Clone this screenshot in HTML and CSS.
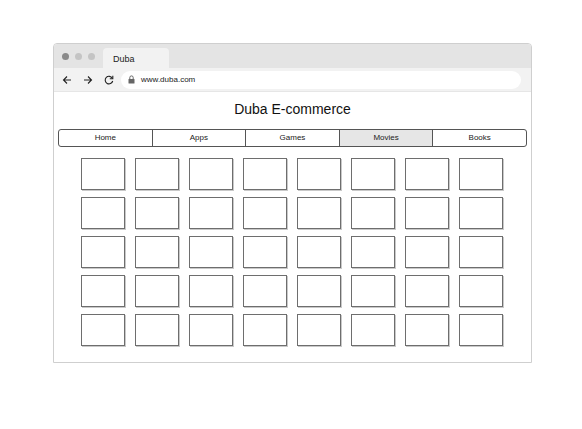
FILE: index.html
```html
<!DOCTYPE html>
<html lang="en">

<head>
    <meta charset="UTF-8">
    <meta name="viewport" content="width=device-width, initial-scale=1.0">
    <link rel="stylesheet" href="styles.css">
    <title>Duba</title>
</head>

<body>
    <div class="window">
        <div class="titlebar">
            <div class="dots">
                <span class="dot dark"></span>
                <span class="dot"></span>
                <span class="dot"></span>
            </div>
            <div class="tab">Duba</div>
        </div>
        <div class="toolbar">
            <div class="nav-icons">
                <svg width="10" height="10" viewBox="0 0 10 10"><path d="M9 5H1.5M5 1.5 1.5 5 5 8.5" fill="none" stroke="#222" stroke-width="1.1"/></svg>
                <svg width="10" height="10" viewBox="0 0 10 10"><path d="M1 5h7.5M5 1.5 8.5 5 5 8.5" fill="none" stroke="#222" stroke-width="1.1"/></svg>
                <svg width="10" height="10" viewBox="0 0 10 10"><path d="M8.3 3.2A3.8 3.8 0 1 0 8.7 6" fill="none" stroke="#222" stroke-width="1.1"/><path d="M8.8 0.8v3H5.8" fill="none" stroke="#222" stroke-width="1.1"/></svg>
            </div>
            <div class="address">
                <svg width="7" height="9" viewBox="0 0 7 9"><path d="M1.8 4V2.6a1.7 1.7 0 0 1 3.4 0V4" fill="none" stroke="#666" stroke-width="1"/><rect x="0.5" y="4" width="6" height="4.5" rx="0.6" fill="#666"/></svg>
                <span>www.duba.com</span>
            </div>
        </div>

        <div class="page">
            <h1>Duba E-commerce</h1>
            <ul class="menu">
                <li>Home</li>
                <li>Apps</li>
                <li>Games</li>
                <li class="active">Movies</li>
                <li>Books</li>
            </ul>
            <div class="grid">
                <div class="item"></div><div class="item"></div><div class="item"></div><div class="item"></div>
                <div class="item"></div><div class="item"></div><div class="item"></div><div class="item"></div>
                <div class="item"></div><div class="item"></div><div class="item"></div><div class="item"></div>
                <div class="item"></div><div class="item"></div><div class="item"></div><div class="item"></div>
                <div class="item"></div><div class="item"></div><div class="item"></div><div class="item"></div>
                <div class="item"></div><div class="item"></div><div class="item"></div><div class="item"></div>
                <div class="item"></div><div class="item"></div><div class="item"></div><div class="item"></div>
                <div class="item"></div><div class="item"></div><div class="item"></div><div class="item"></div>
                <div class="item"></div><div class="item"></div><div class="item"></div><div class="item"></div>
                <div class="item"></div><div class="item"></div><div class="item"></div><div class="item"></div>
            </div>
        </div>
    </div>
</body>

</html>
```

FILE: styles.css
```css
* {
    margin: 0;
    padding: 0;
    box-sizing: border-box;
    font-family: "Liberation Sans", Arial, Helvetica, sans-serif;
}

body {
    background: #fff;
}

.window {
    margin: 43px 0 0 53px;
    width: 479px;
    height: 320px;
    border: 1px solid #cfcfcf;
    border-radius: 4px 4px 0 0;
    overflow: hidden;
}

.titlebar {
    height: 24px;
    background: #e4e4e4;
    display: flex;
    align-items: flex-end;
}

.dots {
    display: flex;
    gap: 6px;
    align-self: center;
    padding-left: 8px;
    width: 49px;
}

.dot {
    width: 7px;
    height: 7px;
    border-radius: 50%;
    background: #c4c4c4;
}

.dot.dark {
    background: #8a8a8a;
}

.tab {
    width: 66px;
    height: 20px;
    background: #f2f2f2;
    border-radius: 4px 4px 0 0;
    font-size: 9px;
    color: #222;
    padding: 6px 0 0 10px;
}

.toolbar {
    height: 24px;
    background: #f2f2f2;
    display: flex;
    align-items: center;
    border-bottom: 1px solid #e6e6e6;
}

.nav-icons {
    display: flex;
    gap: 11px;
    padding-left: 8px;
    width: 67px;
}

.address {
    flex: 1;
    margin-right: 10px;
    height: 18px;
    background: #fff;
    border-radius: 9px;
    display: flex;
    align-items: center;
    gap: 6px;
    padding-left: 7px;
    font-size: 8px;
    color: #222;
}

.page {
    padding: 0 4px;
}

h1 {
    font-weight: normal;
    font-size: 14px;
    color: #111;
    text-align: center;
    margin: 8px 0 11px;
    line-height: 18px;
}

.menu {
    list-style: none;
    display: flex;
    height: 18px;
    border: 1px solid #555;
    border-radius: 3px;
    overflow: hidden;
}

.menu li {
    flex: 1;
    text-align: center;
    font-size: 8px;
    line-height: 16px;
    color: #222;
    border-left: 1px solid #555;
}

.menu li:first-child {
    border-left: none;
}

.menu li.active {
    background: #e6e6e6;
}

.grid {
    display: grid;
    grid-template-columns: repeat(8, 44px);
    grid-auto-rows: 32px;
    column-gap: 10px;
    row-gap: 7px;
    justify-content: center;
    margin-top: 11px;
    padding-right: 2px;
}

.item {
    border: 1px solid #6e6e6e;
    box-shadow: 1px 1px 0 #c9c9c9;
}
```
